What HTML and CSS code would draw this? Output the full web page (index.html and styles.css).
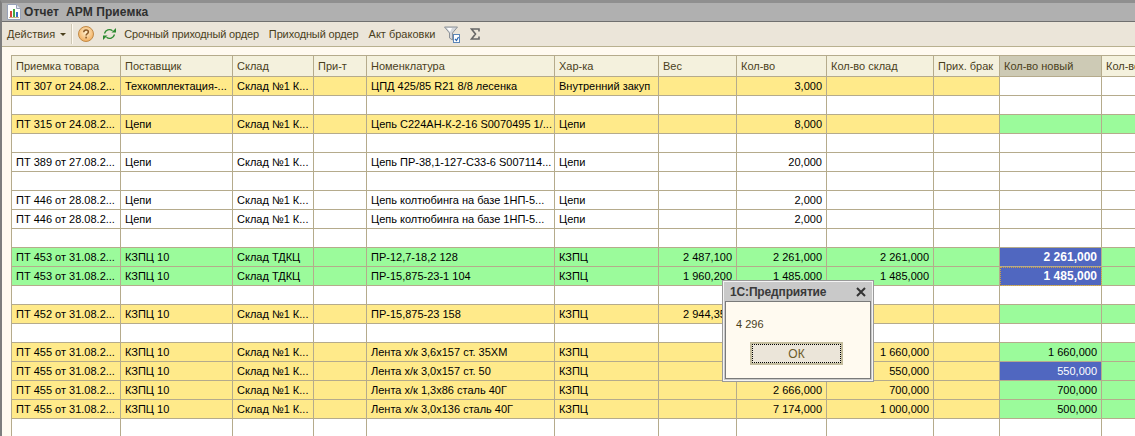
FILE: index.html
```html
<!DOCTYPE html>
<html lang="ru">

<head>
  <meta charset="UTF-8">
  <title>Отчет АРМ Приемка</title>
  <link rel="stylesheet" href="styles.css">
</head>

<body>
  <div class="window">
    <div class="title-bar">
      <svg class="title-icon" width="14" height="16" viewBox="0 0 14 16">
        <path d="M.5.5h9l4 4v11H.5z" fill="#fff" stroke="#98a2b8" />
        <path d="M9.5.5v4h4" fill="#dfe4ee" stroke="#98a2b8" />
        <rect x="3" y="7" width="2" height="6" fill="#d8453a" />
        <rect x="6" y="5" width="2" height="8" fill="#45a845" />
        <rect x="9" y="8" width="2" height="5" fill="#3a6fc8" />
        <path d="M2 13.500h10" stroke="#c8b488" />
      </svg>
      <span class="title-text">Отчет&nbsp; АРМ Приемка</span>
    </div>

    <div class="toolbar">
      <span class="tool tool-menu">Действия</span>
      <span class="menu-arrow"></span>
      <span class="tool-sep"></span>
      <svg class="tool-help" width="16" height="16" viewBox="0 0 16 16">
        <defs>
          <radialGradient id="helpFill" cx="50%" cy="40%" r="60%">
            <stop offset="0" stop-color="#fff0cf" />
            <stop offset="1" stop-color="#f2ad5c" />
          </radialGradient>
        </defs>
        <circle cx="8" cy="8" r="7.500" fill="url(#helpFill)" stroke="#c08a48" />
        <path d="M5.700 6.200C5.800 4.800 6.800 4 8 4c1.400 0 2.400.8 2.400 2 0 1.700-2.300 1.700-2.300 3.500" fill="none" stroke="#8a5a28" stroke-width="1.500" />
        <rect x="7.300" y="10.700" width="1.600" height="1.700" fill="#8a5a28" />
      </svg>
      <svg class="tool-refresh" width="15" height="14" viewBox="0 0 15 14">
        <path d="M2.500 6.500A5 5 0 0 1 10.500 3.800" fill="none" stroke="#2c8a30" stroke-width="1.300" />
        <path d="M9.500 5.500h4.500V1z" fill="#2c8a30" />
        <path d="M12.500 7.500A5 5 0 0 1 4.500 10.200" fill="none" stroke="#2c8a30" stroke-width="1.300" />
        <path d="M5.500 8.500H1V13z" fill="#2c8a30" />
      </svg>
      <span class="tool tool-urgent">Срочный приходный ордер</span>
      <span class="tool tool-order">Приходный ордер</span>
      <span class="tool tool-reject">Акт браковки</span>
      <svg class="tool-filter" width="16" height="17" viewBox="0 0 16 17">
        <path d="M.5 1h13L8.500 7v7l-3-2V7z" fill="#d5d8dc" stroke="#8d9298" />
        <path d="M3 2h5l-2 4z" fill="#fff" />
        <rect x="9.500" y="8.500" width="6" height="8" fill="#fff" stroke="#5b86b8" />
        <path d="M11 13l1.500 1.500L14.500 11" fill="none" stroke="#2a66b0" stroke-width="1.200" />
      </svg>
      <svg class="tool-sum" width="10" height="12" viewBox="0 0 10 12">
        <path d="M9 3.500V1H1.500L5.500 6 1.500 11H9V8.500" fill="none" stroke="#666" stroke-width="1.600" />
      </svg>
    </div>

    <div class="content">
      <table class="grid">
        <colgroup>
          <col class="col-doc">
          <col class="col-vendor">
          <col class="col-store">
          <col class="col-note">
          <col class="col-item">
          <col class="col-kind">
          <col class="col-weight">
          <col class="col-qty">
          <col class="col-qty-store">
          <col class="col-reject">
          <col class="col-qty-new">
          <col class="col-last">
        </colgroup>
        <thead>
          <tr>
            <th>Приемка товара</th>
            <th>Поставщик</th>
            <th>Склад</th>
            <th>При-т</th>
            <th>Номенклатура</th>
            <th>Хар-ка</th>
            <th>Вес</th>
            <th>Кол-во</th>
            <th>Кол-во склад</th>
            <th>Прих. брак</th>
            <th class="th-active">Кол-во новый</th>
            <th>Кол-во</th>
          </tr>
        </thead>
        <tbody>
          <tr class="row-yellow">
            <td>ПТ 307 от 24.08.2...</td>
            <td>Техкомплектация-...</td>
            <td>Склад №1 К...</td>
            <td></td>
            <td>ЦПД 425/85 R21 8/8 лесенка</td>
            <td>Внутренний закуп</td>
            <td></td>
            <td class="num">3,000</td>
            <td></td>
            <td></td>
            <td class="cell-white"></td>
            <td class="cell-white"></td>
          </tr>
          <tr><td></td><td></td><td></td><td></td><td></td><td></td><td></td><td></td><td></td><td></td><td></td><td></td></tr>
          <tr class="row-yellow">
            <td>ПТ 315 от 24.08.2...</td>
            <td>Цепи</td>
            <td>Склад №1 К...</td>
            <td></td>
            <td>Цепь С224АН-К-2-16 S0070495 1/...</td>
            <td>Цепи</td>
            <td></td>
            <td class="num">8,000</td>
            <td></td>
            <td></td>
            <td class="cell-green"></td>
            <td class="cell-green"></td>
          </tr>
          <tr><td></td><td></td><td></td><td></td><td></td><td></td><td></td><td></td><td></td><td></td><td></td><td></td></tr>
          <tr>
            <td>ПТ 389 от 27.08.2...</td>
            <td>Цепи</td>
            <td>Склад №1 К...</td>
            <td></td>
            <td>Цепь ПР-38,1-127-С33-6 S007114...</td>
            <td>Цепи</td>
            <td></td>
            <td class="num">20,000</td>
            <td></td>
            <td></td>
            <td></td>
            <td></td>
          </tr>
          <tr><td></td><td></td><td></td><td></td><td></td><td></td><td></td><td></td><td></td><td></td><td></td><td></td></tr>
          <tr>
            <td>ПТ 446 от 28.08.2...</td>
            <td>Цепи</td>
            <td>Склад №1 К...</td>
            <td></td>
            <td>Цепь колтюбинга на базе 1НП-5...</td>
            <td>Цепи</td>
            <td></td>
            <td class="num">2,000</td>
            <td></td>
            <td></td>
            <td></td>
            <td></td>
          </tr>
          <tr>
            <td>ПТ 446 от 28.08.2...</td>
            <td>Цепи</td>
            <td>Склад №1 К...</td>
            <td></td>
            <td>Цепь колтюбинга на базе 1НП-5...</td>
            <td>Цепи</td>
            <td></td>
            <td class="num">2,000</td>
            <td></td>
            <td></td>
            <td></td>
            <td></td>
          </tr>
          <tr><td></td><td></td><td></td><td></td><td></td><td></td><td></td><td></td><td></td><td></td><td></td><td></td></tr>
          <tr class="row-green">
            <td>ПТ 453 от 31.08.2...</td>
            <td>КЗПЦ 10</td>
            <td>Склад ТДКЦ</td>
            <td></td>
            <td>ПР-12,7-18,2 128</td>
            <td>КЗПЦ</td>
            <td class="num">2 487,100</td>
            <td class="num">2 261,000</td>
            <td class="num">2 261,000</td>
            <td></td>
            <td class="num cell-sel cell-bold">2 261,000</td>
            <td></td>
          </tr>
          <tr class="row-green">
            <td>ПТ 453 от 31.08.2...</td>
            <td>КЗПЦ 10</td>
            <td>Склад ТДКЦ</td>
            <td></td>
            <td>ПР-15,875-23-1 104</td>
            <td>КЗПЦ</td>
            <td class="num">1 960,200</td>
            <td class="num">1 485,000</td>
            <td class="num">1 485,000</td>
            <td></td>
            <td class="num cell-sel cell-bold cell-focus">1 485,000</td>
            <td></td>
          </tr>
          <tr><td></td><td></td><td></td><td></td><td></td><td></td><td></td><td></td><td></td><td></td><td></td><td></td></tr>
          <tr class="row-yellow">
            <td>ПТ 452 от 31.08.2...</td>
            <td>КЗПЦ 10</td>
            <td>Склад №1 К...</td>
            <td></td>
            <td>ПР-15,875-23 158</td>
            <td>КЗПЦ</td>
            <td class="num">2 944,350</td>
            <td></td>
            <td></td>
            <td></td>
            <td class="cell-green"></td>
            <td class="cell-green"></td>
          </tr>
          <tr><td></td><td></td><td></td><td></td><td></td><td></td><td></td><td></td><td></td><td></td><td></td><td></td></tr>
          <tr class="row-yellow">
            <td>ПТ 455 от 31.08.2...</td>
            <td>КЗПЦ 10</td>
            <td>Склад №1 К...</td>
            <td></td>
            <td>Лента х/к 3,6х157 ст. 35ХМ</td>
            <td>КЗПЦ</td>
            <td></td>
            <td></td>
            <td class="num">1 660,000</td>
            <td></td>
            <td class="num cell-green">1 660,000</td>
            <td class="cell-green"></td>
          </tr>
          <tr class="row-yellow">
            <td>ПТ 455 от 31.08.2...</td>
            <td>КЗПЦ 10</td>
            <td>Склад №1 К...</td>
            <td></td>
            <td>Лента х/к 3,0х157 ст. 50</td>
            <td>КЗПЦ</td>
            <td></td>
            <td></td>
            <td class="num">550,000</td>
            <td></td>
            <td class="num cell-sel">550,000</td>
            <td class="cell-green"></td>
          </tr>
          <tr class="row-yellow">
            <td>ПТ 455 от 31.08.2...</td>
            <td>КЗПЦ 10</td>
            <td>Склад №1 К...</td>
            <td></td>
            <td>Лента х/к 1,3х86 сталь 40Г</td>
            <td>КЗПЦ</td>
            <td></td>
            <td class="num">2 666,000</td>
            <td class="num">700,000</td>
            <td></td>
            <td class="num cell-green">700,000</td>
            <td class="cell-green"></td>
          </tr>
          <tr class="row-yellow">
            <td>ПТ 455 от 31.08.2...</td>
            <td>КЗПЦ 10</td>
            <td>Склад №1 К...</td>
            <td></td>
            <td>Лента х/к 3,0х136 сталь 40Г</td>
            <td>КЗПЦ</td>
            <td></td>
            <td class="num">7 174,000</td>
            <td class="num">1 000,000</td>
            <td></td>
            <td class="num cell-green">500,000</td>
            <td class="cell-green"></td>
          </tr>
          <tr><td></td><td></td><td></td><td></td><td></td><td></td><td></td><td></td><td></td><td></td><td></td><td></td></tr>
        </tbody>
      </table>
    </div>

    <div class="dialog">
      <div class="dialog-head">
        <span class="dialog-title">1С:Предприятие</span>
        <svg class="dialog-close" width="10" height="10" viewBox="0 0 10 10">
          <path d="M1 1l8 8M9 1l-8 8" stroke="#333" stroke-width="2" />
        </svg>
      </div>
      <div class="dialog-body">
        <div class="dialog-msg">4 296</div>
        <div class="dialog-actions">
          <div class="dialog-btn"><span class="dialog-btn-in">ОК</span></div>
        </div>
      </div>
    </div>
  </div>
</body>

</html>
```

FILE: styles.css
```css
html,
body {
  margin: 0;
  height: 100%;
  overflow: hidden;
}

body {
  font-family: "Liberation Sans", Arial, sans-serif;
  font-size: 11px;
  color: #000;
  background-color: #fffaf0;
}

.window {
  position: relative;
  display: flex;
  flex-direction: column;
  height: 100%;
  box-sizing: border-box;
  border-top: 3px solid #8f8f8f;
  border-left: 2px solid #7d7d7d;
}

.title-bar {
  display: flex;
  align-items: center;
  flex: none;
  height: 18px;
  background-color: #b0b0b0;
  border-bottom: 1px solid #6f6f6f;
}

.title-icon {
  margin-left: 5px;
}

.title-text {
  margin-left: 3px;
  font-size: 12px;
  font-weight: bold;
  letter-spacing: 0.1px;
  color: #2f2f2f;
}

.toolbar {
  display: flex;
  align-items: center;
  flex: none;
  height: 24px;
  background-color: #ebe5d9;
  border-bottom: 1px solid #b8b08f;
  color: #4a3f1c;
}

.tool {
  white-space: nowrap;
}

.tool-menu {
  margin-left: 5px;
}

.menu-arrow {
  width: 0;
  height: 0;
  margin-left: 5px;
  border-top: 3px solid #4a3f1c;
  border-left: 3px solid transparent;
  border-right: 3px solid transparent;
}

.tool-sep {
  width: 1px;
  height: 20px;
  margin-left: 5px;
  background-color: #cfc8b4;
  border-right: 1px solid #fffaf0;
}

.tool-help {
  margin-left: 5px;
}

.tool-refresh {
  margin-left: 8px;
}

.tool-urgent {
  margin-left: 7px;
  letter-spacing: -0.17px;
}

.tool-order {
  margin-left: 10px;
  letter-spacing: -0.13px;
}

.tool-reject {
  margin-left: 10px;
}

.tool-filter {
  margin-left: 9px;
}

.tool-sum {
  margin-left: 10px;
}

.content {
  flex: 1;
  overflow: hidden;
  padding: 8px 0 0 9px;
}

.grid {
  table-layout: fixed;
  width: 1192px;
  border-collapse: separate;
  border-spacing: 0;
  border-left: 1px solid #b5ab8c;
  border-top: 1px solid #b5ab8c;
  background-color: #fff;
}

.col-doc { width: 109px; }
.col-vendor { width: 112px; }
.col-store { width: 81px; }
.col-note { width: 53px; }
.col-item { width: 188px; }
.col-kind { width: 104px; }
.col-weight { width: 78px; }
.col-qty { width: 90px; }
.col-qty-store { width: 107px; }
.col-reject { width: 66px; }
.col-qty-new { width: 102px; }
.col-last { width: 102px; }

th,
td {
  box-sizing: border-box;
  padding: 0 4px;
  border-right: 1px solid #b5ab8c;
  border-bottom: 1px solid #b5ab8c;
  white-space: nowrap;
  overflow: hidden;
}

th {
  height: 21px;
  font-weight: normal;
  text-align: left;
  color: #4a3f1c;
  background-color: #f4f1dd;
}

th.th-active {
  background-color: #cdcab5;
}

td {
  height: 19px;
}

.row-yellow td {
  background-color: #ffea8a;
}

.row-green td {
  background-color: #9bfb9b;
}

td.num {
  text-align: right;
}

.row-yellow td.cell-white {
  background-color: #fff;
}

.row-yellow td.cell-green {
  background-color: #9bfb9b;
}

.row-green td.cell-sel,
.row-yellow td.cell-sel {
  background-color: #5067c0;
  color: #fff;
}

td.cell-bold {
  font-size: 12px;
  font-weight: bold;
}

td.cell-focus {
  outline: 1px dotted #d0a040;
  outline-offset: -1px;
}

/* окно сообщения поверх таблицы */
.dialog {
  position: absolute;
  left: 721px;
  top: 278px;
  width: 150px;
  box-sizing: border-box;
  border: 1px solid #f4f4f4;
  outline: 1px solid #9a9a9a;
  background-color: #c9c9c9;
  padding: 0 1px 1px;
}

.dialog-head {
  display: flex;
  align-items: center;
  justify-content: space-between;
  height: 19px;
  padding: 0 5px;
}

.dialog-title {
  font-size: 12px;
  font-weight: bold;
  letter-spacing: -0.15px;
  color: #3a3a3a;
}

.dialog-body {
  height: 78px;
  box-sizing: border-box;
  border: 1px solid #7a7a7a;
  background-color: #fffaf0;
}

.dialog-msg {
  padding: 16px 0 0 10px;
  color: #4a3f1c;
}

.dialog-actions {
  display: flex;
  margin-top: 12px;
  padding-left: 24px;
}

.dialog-btn {
  width: 93px;
  height: 23px;
  box-sizing: border-box;
  border: 2px solid #c4bd9e;
  background-color: #ebe5d9;
}

.dialog-btn-in {
  display: flex;
  align-items: center;
  justify-content: center;
  height: 100%;
  box-sizing: border-box;
  border: 1px dotted #000;
  font-size: 12px;
  color: #6b5b2a;
}
```
